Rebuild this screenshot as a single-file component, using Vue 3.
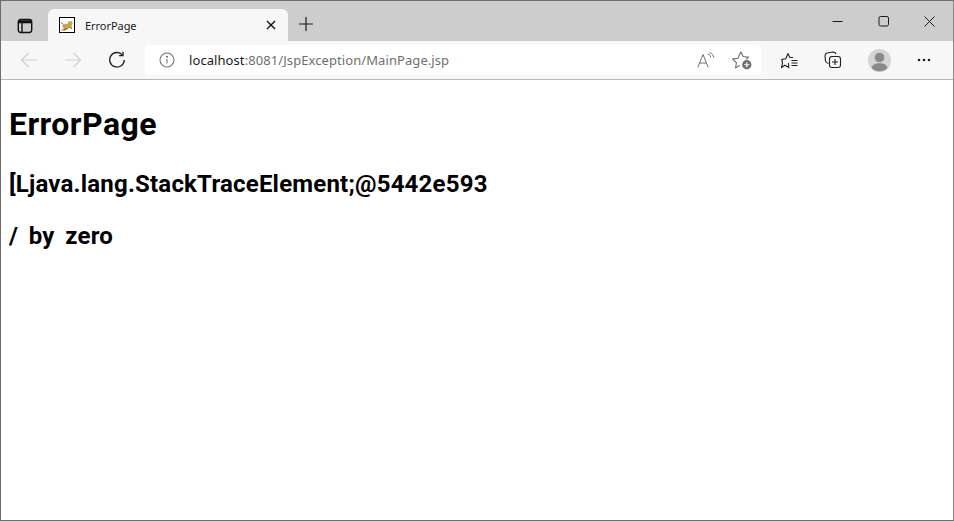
<script setup>
const title = 'ErrorPage'
</script>

<template>
  <div class="window">
    <div class="tabstrip">
      <button class="tab-actions" aria-label="Tab actions">
        <svg width="16" height="16" viewBox="0 0 16 16" fill="none" stroke="#111" stroke-width="1.400">
          <rect x="1.300" y="1.500" width="13.400" height="13" rx="2.400" />
          <path d="M1.300 3.800h13.400" stroke-width="3" />
          <path d="M5 5v9.500" />
        </svg>
      </button>
      <div class="tab">
        <svg class="favicon" width="16" height="16" viewBox="0 0 16 16">
          <rect x=".5" y=".5" width="15" height="15" fill="#fff" stroke="#000" />
          <path d="M3 8.500l3-1.500 3-.5.500-3 1 1h1.500l1-1 .5 3-1 2 1 2.500-2.500-.5-2 1.500-3 1.500-3 .5 2-2.500-1-1z" fill="#c9a24c" />
          <path d="M2 5.500l2.500 2M5 13l3-1.500M10.500 10l2.500 2" stroke="#6d5b33" stroke-width=".9" fill="none" />
          <path d="M2 13.500l3-2" stroke="#9a9a9a" stroke-width=".9" fill="none" />
        </svg>
        <span class="tab-title">{{ title }}</span>
        <svg class="tab-close" width="10" height="10" viewBox="0 0 10 10" stroke="#111" stroke-width="1.400" fill="none">
          <path d="M1 1l8 8M9 1l-8 8" />
        </svg>
      </div>
      <svg class="new-tab" width="14" height="14" viewBox="0 0 14 14" stroke="#1a1a1a" stroke-width="1.200" fill="none">
        <path d="M7 0v14M0 7h14" />
      </svg>
      <div class="window-controls">
        <svg width="11" height="11" viewBox="0 0 11 11" stroke="#1a1a1a" fill="none"><path d="M.5 5.500h10" /></svg>
        <svg width="11" height="11" viewBox="0 0 11 11" stroke="#1a1a1a" fill="none"><rect x="1" y=".5" width="9.500" height="9.500" rx="1.600" /></svg>
        <svg width="11" height="11" viewBox="0 0 11 11" stroke="#1a1a1a" fill="none"><path d="M.5.500l10 10M10.500.500l-10 10" /></svg>
      </div>
    </div>
    <div class="toolbar">
      <div class="nav">
        <svg width="18" height="16" viewBox="0 0 18 16" stroke="#cfcfcf" stroke-width="1.200" fill="none"><path d="M17 8H1.500M8.500 1l-7 7 7 7" /></svg>
        <svg width="18" height="16" viewBox="0 0 18 16" stroke="#cfcfcf" stroke-width="1.200" fill="none"><path d="M1 8h15.500M9.500 1l7 7-7 7" /></svg>
        <svg width="18" height="18" viewBox="0 0 18 18" stroke="#1f1f1f" stroke-width="1.300" fill="none"><path d="M14.600 4.100A7.300 7.300 0 1 0 16.300 9" /><path d="M15 .8v3.900h-3.900" /></svg>
      </div>
      <div class="addressbar">
        <svg class="info" width="16" height="16" viewBox="0 0 16 16" fill="none" stroke="#757575" stroke-width="1.100">
          <circle cx="8" cy="8" r="7" />
          <path d="M8 7v4.500" />
          <circle cx="8" cy="4.800" r=".5" fill="#757575" />
        </svg>
        <span class="url"><span class="host">localhost</span>:8081/JspException/MainPage.jsp</span>
        <div class="address-actions">
          <span class="read-aloud">
            <svg width="18" height="17" viewBox="0 0 18 17" stroke="#6f6f6f" stroke-width="1" fill="none">
              <path d="M.8 15.500L6 2.500l5.200 13M2.600 11h6.800" />
              <path d="M10.800 1.800c1.800.8 2.800 2 3 3.800M12.800.6c2.300 1 3.800 2.800 4 5" />
            </svg>
          </span>
          <svg class="fav-add" width="20" height="20" viewBox="0 0 18 18" fill="none" stroke="#6f6f6f" stroke-width="1">
            <path d="M8 1.500l2 4.300 4.800.6-2.200 2.100M7 14l-3.800 2 .8-4.500L.7 8.100l4.600-.7L8 1.500" />
            <circle cx="13.300" cy="13.300" r="4.200" fill="#6f6f6f" stroke="none" />
            <path d="M13.300 11v4.600M11 13.300h4.600" stroke="#fff" />
          </svg>
        </div>
      </div>
      <div class="tools">
        <svg width="17" height="17" viewBox="0 0 17 17" fill="none" stroke="#1f1f1f" stroke-width="1.100">
          <path d="M7 1.500l1.900 4h3.100M7.500 11l.2 4.500-3.800-2.300-3.300 2.300.9-4.400L.8 7.400l4-.7L7 1.500" />
          <path d="M10.500 8.500h6M10.500 11h6M10.500 13.500h6" />
        </svg>
        <svg width="18" height="18" viewBox="0 0 18 18" fill="none" stroke="#1f1f1f" stroke-width="1.100">
          <path d="M4.500 12.500c-2-.5-2.800-1.300-3-2.500L1 5c0-1.500.7-2.500 2-3l6-1c1.500 0 2.500.7 3 2" />
          <rect x="5.500" y="5.500" width="11" height="11" rx="2.400" />
          <path d="M11 8v6M8 11h6" />
        </svg>
        <span class="avatar">
          <svg width="23" height="23" viewBox="0 0 23 23">
            <circle cx="11.500" cy="11.500" r="11.500" fill="#d5d5d5" />
            <circle cx="11.500" cy="8.500" r="4.800" fill="#8a8a8a" />
            <path d="M3.500 19c1-3.500 4-4.800 8-4.800s7 1.300 8 4.800a11.500 11.500 0 0 1-16 0z" fill="#8a8a8a" />
          </svg>
        </span>
        <svg width="14" height="4" viewBox="0 0 14 4" fill="#1f1f1f">
          <circle cx="2" cy="2" r="1.300" /><circle cx="7" cy="2" r="1.300" /><circle cx="12" cy="2" r="1.300" />
        </svg>
      </div>
    </div>
    <main class="page">
      <h1>ErrorPage</h1>
      <h2>[Ljava.lang.StackTraceElement;@5442e593</h2>
      <h2 class="spaced">/ by zero</h2>
    </main>
  </div>
</template>

<style>
html, body { margin: 0; background: #fff; }
</style>

<style scoped>
.window {
  box-sizing: border-box;
  width: 954px;
  height: 521px;
  border: 1px solid #6e6e6e;
  border-right-color: #8a8a8a;
  display: flex;
  flex-direction: column;
  overflow: hidden;
  font-family: "Noto Sans", "Liberation Sans", sans-serif;
  background: #fff;
}
.tabstrip {
  height: 40px;
  background: #cdcdcd;
  display: flex;
  align-items: flex-end;
  flex: none;
}
.tab-actions {
  width: 47px;
  height: 31px;
  border: 0;
  padding: 0 0 0 1px;
  background: none;
  display: flex;
  align-items: center;
  justify-content: center;
}
.tab {
  width: 240px;
  height: 32px;
  background: #f7f7f7;
  border-radius: 6px 6px 0 0;
  display: flex;
  align-items: center;
  box-sizing: border-box;
  padding: 0 12px 0 11px;
}
.tab-title {
  margin-left: 10px;
  font-size: 11px;
  color: #1a1a1a;
  flex: 1;
  letter-spacing: -.05px;
}
.new-tab {
  margin: 0 0 10px 11px;
}
.window-controls {
  margin-left: auto;
  align-self: flex-start;
  margin-top: 15px;
  margin-right: 18px;
  display: flex;
  gap: 35px;
}
.toolbar {
  height: 38px;
  flex: none;
  box-sizing: content-box;
  background: #f7f7f7;
  border-bottom: 1px solid #b9b9b9;
  display: flex;
  align-items: center;
}
.nav {
  display: flex;
  align-items: center;
  width: 144px;
  box-sizing: border-box;
  padding-left: 19px;
  gap: 26px;
}
.addressbar {
  width: 616px;
  height: 30px;
  background: #fff;
  border-radius: 4px;
  display: flex;
  align-items: center;
  box-sizing: border-box;
  padding-left: 14px;
}
.url {
  margin-left: 14px;
  font-size: 13px;
  color: #6f6f6f;
  letter-spacing: .08px;
}
.host { color: #1a1a1a; }
.address-actions {
  margin-left: auto;
  margin-right: 9px;
  display: flex;
  align-items: center;
  gap: 17px;
}
.read-aloud { display: flex; }
.tools {
  display: flex;
  align-items: center;
  padding-left: 20px;
  gap: 26px;
}
.avatar { display: flex; }
.page {
  flex: 1;
  padding: 0 8px;
  color: #000;
  font-family: Roboto, "Noto Sans", sans-serif;
}
h1 {
  margin: 22px 0 21px;
  font-size: 32px;
  line-height: 44px;
  font-weight: 700;
  letter-spacing: .45px;
}
h2 {
  margin: 0 0 18px;
  font-size: 24px;
  line-height: 34px;
  font-weight: 700;
  letter-spacing: .2px;
}
.spaced { word-spacing: 4.5px; }
</style>
